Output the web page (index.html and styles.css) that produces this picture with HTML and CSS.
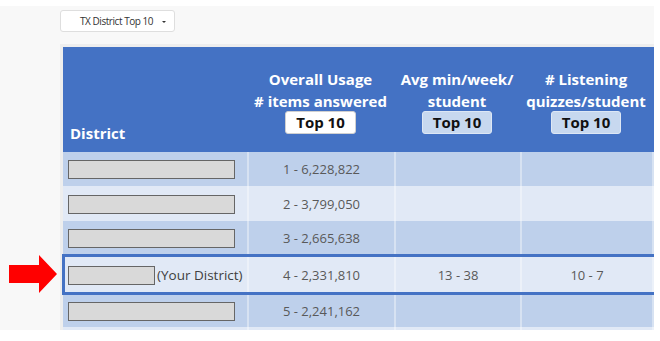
FILE: index.html
```html
<!DOCTYPE html>
<html>
<head>
<meta charset="utf-8">
<link rel="stylesheet" href="styles.css">
</head>
<body>
<div class="panel">
  <div class="dropdown"><span class="dd-label">TX District Top 10</span><span class="caret"></span></div>
  <div class="frame">
    <div class="table">
      <div class="row head">
        <div class="cell c1 h-district">District</div>
        <div class="cell c2 h-col"><div>Overall Usage</div><div># items answered</div><span class="tag tag-white">Top 10</span></div>
        <div class="cell c3 h-col"><div>Avg min/week/</div><div>student</div><span class="tag tag-blue">Top 10</span></div>
        <div class="cell c4 h-col"><div># Listening</div><div>quizzes/student</div><span class="tag tag-blue">Top 10</span></div>
        <div class="cell c5 h-col"></div>
      </div>
      <div class="row odd r34">
        <div class="cell c1 name"><span class="mask"></span></div>
        <div class="cell c2 num">1 - 6,228,822</div>
        <div class="cell c3 num"></div>
        <div class="cell c4 num"></div>
        <div class="cell c5 num"></div>
      </div>
      <div class="row even r35">
        <div class="cell c1 name"><span class="mask"></span></div>
        <div class="cell c2 num">2 - 3,799,050</div>
        <div class="cell c3 num"></div>
        <div class="cell c4 num"></div>
        <div class="cell c5 num"></div>
      </div>
      <div class="row odd r34">
        <div class="cell c1 name"><span class="mask"></span></div>
        <div class="cell c2 num">3 - 2,665,638</div>
        <div class="cell c3 num"></div>
        <div class="cell c4 num"></div>
        <div class="cell c5 num"></div>
      </div>
      <div class="row even mine">
        <div class="cell c1 name"><span class="mask short"></span><span class="yours">(Your District)</span></div>
        <div class="cell c2 num">4 - 2,331,810</div>
        <div class="cell c3 num">13 - 38</div>
        <div class="cell c4 num">10 - 7</div>
        <div class="cell c5 num"></div>
      </div>
      <div class="row odd r33">
        <div class="cell c1 name"><span class="mask"></span></div>
        <div class="cell c2 num">5 - 2,241,162</div>
        <div class="cell c3 num"></div>
        <div class="cell c4 num"></div>
        <div class="cell c5 num"></div>
      </div>
      <div class="row even r34">
        <div class="cell c1 name"><span class="mask"></span></div>
        <div class="cell c2 num"></div>
        <div class="cell c3 num"></div>
        <div class="cell c4 num"></div>
        <div class="cell c5 num"></div>
      </div>
    </div>
  </div>
  <svg class="arrow" width="48" height="38" viewBox="0 0 48 38">
    <polygon points="0,10 30,10 30,0 48,19 30,38 30,28 0,28" fill="#ff0000"/>
  </svg>
</div>
</body>
</html>
```

FILE: styles.css
```css
html, body {
  margin: 0;
  padding: 0;
  background: #ffffff;
}

body {
  font-family: "Open Sans", "DejaVu Sans", sans-serif;
}

.panel {
  position: relative;
  margin-top: 6px;
  width: 654px;
  height: 324px;
  box-sizing: border-box;
  padding: 4px 0 0 60px;
  background: #f8f8f8;
  overflow: hidden;
}

.dropdown {
  width: 115px;
  height: 22px;
  box-sizing: border-box;
  border: 1px solid #dedede;
  border-radius: 3px;
  background: #ffffff;
  display: flex;
  align-items: center;
  padding-left: 19px;
}

.dd-label {
  font-size: 10px;
  letter-spacing: -0.45px;
  color: #333333;
}

.caret {
  margin-left: 9px;
  width: 0;
  height: 0;
  border-left: 2px solid transparent;
  border-right: 2px solid transparent;
  border-top: 2px solid #333333;
  margin-top: 2px;
}

.frame {
  margin-top: 12px;
  padding: 3px;
  background: #eeeeee;
  width: max-content;
}

.table {
  display: flex;
  flex-direction: column;
}

.row {
  display: grid;
  grid-template-columns: 184px 147px 126px 132px 120px;
}

.head {
  height: 105px;
  background: #4472c4;
  color: #ffffff;
  font-weight: 700;
  font-size: 15px;
  line-height: 22px;
}

.h-district {
  display: flex;
  align-items: flex-end;
  padding: 0 0 8px 7px;
}

.h-col {
  display: flex;
  flex-direction: column;
  align-items: center;
  justify-content: flex-end;
  padding-bottom: 18px;
  text-align: center;
}

.tag {
  display: block;
  box-sizing: border-box;
  height: 23px;
  line-height: 20px;
  padding: 0 10px;
  border-radius: 3px;
  color: #111111;
  font-size: 15px;
  margin-top: -1px;
}

.tag-white {
  background: #ffffff;
  border: 1px solid #d0d0d0;
}

.tag-blue {
  background: #c7d8ef;
  border: 1px solid #dde7f5;
}

.cell {
  box-sizing: border-box;
  min-width: 0;
}

.odd { background: #bed0eb; }
.even { background: #e1e9f6; }

.r33 { height: 33px; }
.r34 { height: 34px; }
.r35 { height: 35px; }

.mine {
  height: 39px;
  position: relative;
  z-index: 1;
  outline: 3px solid #4472c4;
  outline-offset: -2px;
}

.num {
  display: flex;
  align-items: center;
  justify-content: center;
  font-size: 13px;
  color: #595959;
  border-left: 2px solid rgba(255, 255, 255, 0.38);
}

.name {
  display: flex;
  align-items: center;
  padding-left: 5px;
  padding-top: 1px;
}

.mask {
  display: block;
  width: 167px;
  height: 19px;
  box-sizing: border-box;
  background: #d9d9d9;
  border: 1px solid #666666;
}

.mask.short {
  width: 87px;
}

.yours {
  margin-left: 2px;
  font-size: 13.5px;
  color: #404040;
  white-space: nowrap;
}

.arrow {
  position: absolute;
  left: 9px;
  top: 249px;
  display: block;
}
```
